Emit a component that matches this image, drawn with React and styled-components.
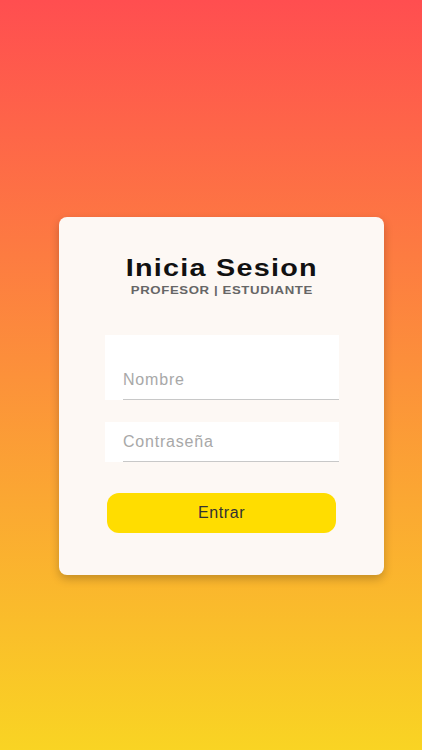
import React, { useState } from "react";
import styled, { createGlobalStyle } from "styled-components";

const GlobalStyle = createGlobalStyle`
  html, body {
    margin: 0;
    padding: 0;
  }
  body {
    font-family: "Liberation Sans", Arial, sans-serif;
    background: linear-gradient(to bottom, #ff4e50 0%, #fc913a 50%, #f9d423 100%);
    min-height: 100vh;
  }
`;

const Page = styled.div`
  min-height: 750px;
  box-sizing: border-box;
  padding: 217px 38px 0 59px;
  display: flex;
  flex-direction: column;
`;

const Card = styled.form`
  width: 325px;
  box-sizing: border-box;
  background: #fdf8f4;
  border-radius: 8px;
  box-shadow: 0 4px 10px rgba(0, 0, 0, 0.22);
  padding: 38px 45px 42px 46px;
  display: flex;
  flex-direction: column;
`;

const Header = styled.div`
  display: flex;
  flex-direction: column;
  align-items: center;
  margin-bottom: 38px;
`;

const Title = styled.h1`
  margin: 0;
  font-size: 23px;
  line-height: 26px;
  font-weight: 700;
  color: #111;
  letter-spacing: 1px;
  transform: scaleX(1.25);
`;

const Subtitle = styled.p`
  margin: 3px 0 0;
  font-size: 11px;
  line-height: 13px;
  font-weight: 700;
  color: #666;
  letter-spacing: 0.5px;
  transform: scaleX(1.2);
`;

const Field = styled.label`
  display: flex;
  align-items: flex-end;
  background: #ffffff;
  padding: ${(p) => (p.$tall ? "27px" : "2px")} 0 0 18px;
  margin-bottom: ${(p) => p.$gap}px;
`;

const Input = styled.input`
  flex: 1;
  min-width: 0;
  height: 38px;
  box-sizing: border-box;
  border: none;
  border-bottom: 1px solid #c8c8c8;
  background: transparent;
  outline: none;
  padding: 0 0 2px;
  font-family: "Liberation Sans", Arial, sans-serif;
  font-size: 16px;
  letter-spacing: 0.8px;
  color: #333;

  &::placeholder {
    color: #a8a8a8;
  }
`;

const Button = styled.button`
  margin: 0 3px 0 2px;
  height: 40px;
  border: none;
  border-radius: 12px;
  background: #ffdd00;
  color: #333;
  font-family: "Liberation Sans", Arial, sans-serif;
  font-size: 16px;
  letter-spacing: 0.6px;
  cursor: pointer;
`;

const App = () => {
  const [nombre, setNombre] = useState("");
  const [pass, setPass] = useState("");

  return (
    <>
      <GlobalStyle />
      <Page>
        <Card onSubmit={(e) => e.preventDefault()}>
          <Header>
            <Title>Inicia Sesion</Title>
            <Subtitle>PROFESOR | ESTUDIANTE</Subtitle>
          </Header>
          <Field $tall $gap={22}>
            <Input
              placeholder="Nombre"
              value={nombre}
              onChange={(e) => setNombre(e.target.value)}
            />
          </Field>
          <Field $gap={31}>
            <Input
              type="password"
              placeholder="Contraseña"
              value={pass}
              onChange={(e) => setPass(e.target.value)}
            />
          </Field>
          <Button type="submit">Entrar</Button>
        </Card>
      </Page>
    </>
  );
};

export default App;
